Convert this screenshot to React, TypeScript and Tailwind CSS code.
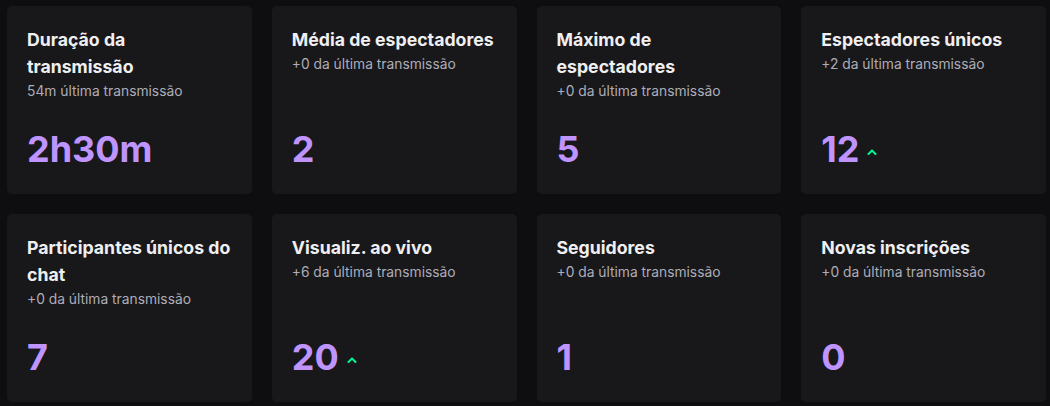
const stats = [
  { title: "Duração da transmissão", sub: "54m última transmissão", value: "2h30m", up: false },
  { title: "Média de espectadores", sub: "+0 da última transmissão", value: "2", up: false },
  { title: "Máximo de espectadores", sub: "+0 da última transmissão", value: "5", up: false },
  { title: "Espectadores únicos", sub: "+2 da última transmissão", value: "12", up: true },
  { title: "Participantes únicos do chat", sub: "+0 da última transmissão", value: "7", up: false },
  { title: "Visualiz. ao vivo", sub: "+6 da última transmissão", value: "20", up: true },
  { title: "Seguidores", sub: "+0 da última transmissão", value: "1", up: false },
  { title: "Novas inscrições", sub: "+0 da última transmissão", value: "0", up: false },
]

function UpArrow() {
  return (
    <svg width="10" height="6" viewBox="0 0 10 6" fill="none" aria-hidden="true" className="mt-[5px]">
      <path d="M1.5 5L5 1.5L8.5 5" stroke="#00f593" strokeWidth="2" strokeLinecap="round" strokeLinejoin="round" />
    </svg>
  )
}

function StatCard({ title, sub, value, up }: { title: string; sub: string; value: string; up: boolean }) {
  return (
    <div className="flex flex-col h-[188px] rounded-[5px] bg-[#18181b] px-5 pt-5 pb-[27px]">
      <div className="text-[17.7px] leading-[27px] font-bold text-[#efeff1]">{title}</div>
      <div className="text-[13.8px] leading-[20px] text-[#adadb8] mt-[1px]">{sub}</div>
      <div className="mt-auto flex items-center gap-[8px]">
        <span className="text-[36px] leading-[36px] font-bold text-[#bf94ff]">{value}</span>
        {up && <UpArrow />}
      </div>
    </div>
  )
}

export default function App() {
  return (
    <div
      className="min-h-screen bg-[#0e0e10] pl-[7px] pr-[4px] pt-[6px]"
      style={{ fontFamily: 'Inter, "Noto Sans", sans-serif' }}
    >
      <div className="grid grid-cols-4 gap-5">
        {stats.map((s) => (
          <StatCard key={s.title} {...s} />
        ))}
      </div>
    </div>
  )
}
